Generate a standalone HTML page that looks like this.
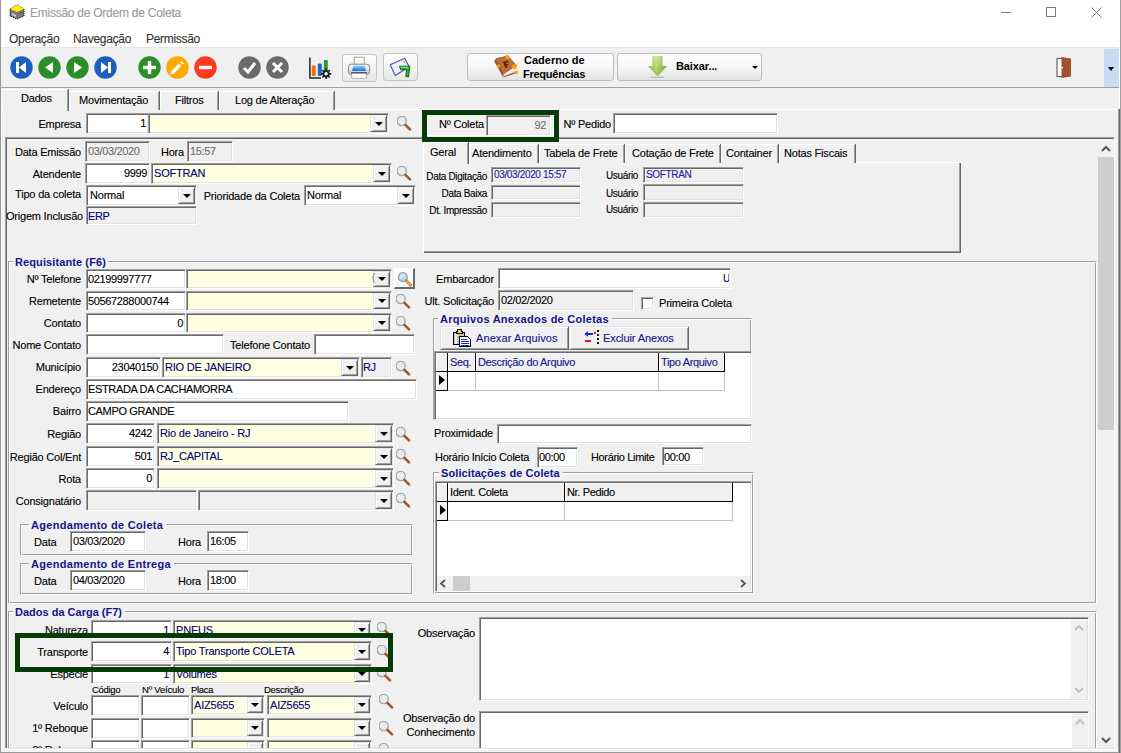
<!DOCTYPE html><html><head><meta charset="utf-8"><style>
html,body{margin:0;padding:0;}
body{width:1121px;height:753px;position:relative;overflow:hidden;background:#fff;font-family:"Liberation Sans",sans-serif;}
.t{position:absolute;white-space:nowrap;font-family:"Liberation Sans",sans-serif;-webkit-text-stroke:0.12px currentColor;}
.b{position:absolute;}
.in{position:absolute;border:1px solid;border-color:#a0a0a0 #fff #fff #a0a0a0;box-shadow:inset 1px 1px 0 #696969, inset -1px -1px 0 #e3e3e3;}
.btn{position:absolute;background:#f0f0f0;border:1px solid;border-color:#e3e3e3 #696969 #696969 #e3e3e3;box-shadow:inset 1px 1px 0 #fff, inset -1px -1px 0 #a0a0a0;}
.tri{position:absolute;width:0;height:0;border-left:4px solid transparent;border-right:4px solid transparent;border-top:4px solid #000;}
.grp{position:absolute;border:1px solid;border-color:#a0a0a0 #fff #fff #a0a0a0;box-shadow:inset 1px 1px 0 #fff, inset -1px -1px 0 #a0a0a0;}
</style></head><body>
<div class="b" style="left:0px;top:0px;width:1px;height:753px;background:#999"></div>
<div class="b" style="left:1120px;top:0px;width:1px;height:753px;background:#a0a0a0"></div>
<svg class="b" style="left:9px;top:4px" width="16" height="16" viewBox="0 0 16 16"><path d="M1 5 L8 1 L15 5 L15 12 L8 15 L1 12 Z" fill="#777" stroke="#000" stroke-width="1" stroke-dasharray="1 1"/><path d="M1 5 L8 1 L15 5 L8 8 Z" fill="#ffef00"/><path d="M3 9 L7 11 L7 13 L3 11Z" fill="#ccc"/><rect x="11" y="8" width="2" height="1" fill="#e00"/><rect x="2" y="10" width="1" height="1" fill="#0c0"/></svg>
<div class="t" style="top:6.43px;font-size:12px;line-height:14px;color:#9a9a9a;letter-spacing:-0.25px;left:30px;">Emissão de Ordem de Coleta</div>
<div class="b" style="left:1001px;top:12px;width:10px;height:1px;background:#7a7a7a"></div>
<div class="b" style="left:1046px;top:7px;width:10px;height:10px;border:1px solid #7a7a7a;box-sizing:border-box"></div>
<svg class="b" style="left:1091px;top:7px" width="11" height="11" viewBox="0 0 11 11"><path d="M0.5 0.5 L10.5 10.5 M10.5 0.5 L0.5 10.5" stroke="#7a7a7a" stroke-width="1"/></svg>
<div class="t" style="top:32.43px;font-size:12px;line-height:14px;color:#333;letter-spacing:-0.3px;left:9px;">Operação</div>
<div class="t" style="top:32.43px;font-size:12px;line-height:14px;color:#333;letter-spacing:-0.3px;left:73px;">Navegação</div>
<div class="t" style="top:32.43px;font-size:12px;line-height:14px;color:#333;letter-spacing:-0.3px;left:146px;">Permissão</div>
<div class="b" style="left:1px;top:47px;width:1118px;height:1px;background:#e6e6e6"></div>
<div class="b" style="left:1px;top:48px;width:1118px;height:39px;background:#f0f0f0"></div>
<div class="b" style="left:1px;top:87px;width:1118px;height:1px;background:#a0a0a0"></div>
<div class="b" style="left:1px;top:88px;width:1118px;height:665px;background:#f0f0f0"></div>
<svg class="b" style="left:9.5px;top:56.3px" width="23" height="23" viewBox="0 0 23 23"><circle cx="11.5" cy="11.5" r="11.2" fill="#1d5fbf"/><rect x="6" y="6" width="3" height="11" fill="#fff"/><path d="M9 11.5 L16 6 L16 17 Z" fill="#fff"/></svg>
<svg class="b" style="left:37.5px;top:56.3px" width="23" height="23" viewBox="0 0 23 23"><circle cx="11.5" cy="11.5" r="11.2" fill="#2a8f2a"/><path d="M7 11.5 L15 6 L15 17 Z" fill="#fff"/></svg>
<svg class="b" style="left:65.5px;top:56.3px" width="23" height="23" viewBox="0 0 23 23"><circle cx="11.5" cy="11.5" r="11.2" fill="#2a8f2a"/><path d="M16 11.5 L8 6 L8 17 Z" fill="#fff"/></svg>
<svg class="b" style="left:93.5px;top:56.3px" width="23" height="23" viewBox="0 0 23 23"><circle cx="11.5" cy="11.5" r="11.2" fill="#1d5fbf"/><rect x="14" y="6" width="3" height="11" fill="#fff"/><path d="M14 11.5 L7 6 L7 17 Z" fill="#fff"/></svg>
<svg class="b" style="left:137.5px;top:56.3px" width="23" height="23" viewBox="0 0 23 23"><circle cx="11.5" cy="11.5" r="11.2" fill="#2a8f2a"/><rect x="5" y="9.8" width="13" height="3.4" fill="#fff"/><rect x="9.8" y="5" width="3.4" height="13" fill="#fff"/></svg>
<svg class="b" style="left:165.5px;top:56.3px" width="23" height="23" viewBox="0 0 23 23"><circle cx="11.5" cy="11.5" r="11.2" fill="#ffa800"/><path d="M7.2 15.8 L14.2 8.8" stroke="#fff" stroke-width="3.4"/><path d="M4.6 18.4 L5.6 14.2 L8.8 17.4 Z" fill="#fff"/><path d="M15.4 7.6 L16.8 6.2" stroke="#fff" stroke-width="3.4"/></svg>
<svg class="b" style="left:193.5px;top:56.3px" width="23" height="23" viewBox="0 0 23 23"><circle cx="11.5" cy="11.5" r="11.2" fill="#fc3a1c"/><rect x="5" y="9.8" width="13" height="3.4" fill="#fff"/></svg>
<svg class="b" style="left:237.5px;top:56.3px" width="23" height="23" viewBox="0 0 23 23"><circle cx="11.5" cy="11.5" r="11.2" fill="#6b6b6b"/><path d="M6 12 L10 16 L17 7" stroke="#fff" stroke-width="3" fill="none"/></svg>
<svg class="b" style="left:265.5px;top:56.3px" width="23" height="23" viewBox="0 0 23 23"><circle cx="11.5" cy="11.5" r="11.2" fill="#6b6b6b"/><path d="M7 7 L16 16 M16 7 L7 16" stroke="#fff" stroke-width="3" fill="none"/></svg>
<svg class="b" style="left:309px;top:57px" width="24" height="24" viewBox="0 0 24 24"><path d="M0.9 0.5 V20.9 H12" stroke="#222" stroke-width="1.5" fill="none"/><rect x="2.8" y="8.5" width="4" height="10.5" rx="1" fill="#ff6a00"/><rect x="8.8" y="6.5" width="4" height="12.5" rx="1" fill="#1e66c8"/><rect x="14.8" y="3" width="4" height="11" rx="1" fill="#2a9a2a"/><g transform="translate(17.1 16.8)"><circle r="3.6" fill="#222"/><path d="M0 -5.2 V5.2 M-5.2 0 H5.2 M-3.7 -3.7 L3.7 3.7 M3.7 -3.7 L-3.7 3.7" stroke="#222" stroke-width="1.7"/><circle r="1.7" fill="#fff"/></g></svg>
<div class="b" style="left:342px;top:54px;width:33px;height:26px;border:1px solid #c4c4c4;border-radius:3px;background:linear-gradient(#fdfdfd,#f4f4f4 50%,#e6e6e6)"></div>
<svg class="b" style="left:347px;top:56px" width="24" height="24" viewBox="0 0 24 24"><defs><linearGradient id="pb" x1="0" y1="0" x2="0" y2="1"><stop offset="0" stop-color="#fafafa"/><stop offset="1" stop-color="#c8c8d4"/></linearGradient><linearGradient id="pt" x1="0" y1="0" x2="0" y2="1"><stop offset="0" stop-color="#9cd4ff"/><stop offset="1" stop-color="#0a6ae8"/></linearGradient><linearGradient id="pp" x1="0" y1="0" x2="0" y2="1"><stop offset="0" stop-color="#fff"/><stop offset="1" stop-color="#f4f4d8"/></linearGradient></defs><rect x="7.2" y="1.2" width="10" height="9" fill="url(#pp)" stroke="#8a8a8a" stroke-width="0.8"/><rect x="1.4" y="8.2" width="21.2" height="10.4" rx="3" fill="url(#pb)" stroke="#7a7a86" stroke-width="0.9"/><path d="M6.5 9.6 H17.5 L19 15 H5 Z" fill="url(#pt)"/><rect x="4" y="16" width="16" height="1.6" fill="#555"/><rect x="4.8" y="17.6" width="14.4" height="4.6" fill="#fff" stroke="#9a9aa6" stroke-width="0.7"/></svg>
<div class="b" style="left:383px;top:53px;width:33px;height:26px;border:1px solid #c4c4c4;border-radius:3px;background:linear-gradient(#fdfdfd,#f4f4f4 50%,#e6e6e6)"></div>
<svg class="b" style="left:389px;top:56px" width="24" height="23" viewBox="0 0 24 23"><path d="M1.2 8.7 L15.7 2.2 L20.1 10.7 L6.2 19.5 Z" fill="#eeeeff" stroke="#4b4bc4" stroke-width="1.1" stroke-linejoin="round"/><circle cx="15.5" cy="6" r="0.9" fill="#9c3"/><path d="M10.5 10.2 H20.8 L19.6 21 L16.8 20.4 L17.6 13.6 H11.5 Z" fill="#22b822" stroke="#0b5a0b" stroke-width="0.9" stroke-linejoin="round"/><path d="M12 11.3 H19.5" stroke="#8ef08e" stroke-width="1"/></svg>
<div class="b" style="left:467px;top:53px;width:145px;height:26px;border:1px solid #bdbdbd;border-radius:3px;background:linear-gradient(#fefefe,#f7f7f7 45%,#e3e3e3)"></div>
<svg class="b" style="left:490px;top:52px" width="32" height="28" viewBox="0 0 32 28"><path d="M4 9 L6 7 L14 22 L13 25 Z" fill="#a0582a"/><path d="M6 6.5 L18 4 L26.5 13.5 L13.5 22.5 Z" fill="#bb6d33" stroke="#8a4a1e" stroke-width="0.6"/><path d="M13.5 22.5 L26.5 13.5 L27.5 19 L14 24.5 Z" fill="#ececf0"/><path d="M13 24.5 L27.5 19 L27 21 L13.5 25.5 Z" fill="#b06030"/><circle cx="17.5" cy="5.2" r="2.2" fill="#ff9c00"/><circle cx="24.5" cy="14.5" r="2.4" fill="#ff9800"/><circle cx="26" cy="20.5" r="1.8" fill="#ff9800"/><circle cx="8.5" cy="14" r="1.4" fill="#ffa800"/><path d="M13 10 L18 8.5 L18.6 10 L15.5 11 L16 12.3 L18 11.7 L18.5 13 L16.5 13.6 L17.3 15.5 L15.6 16 Z" fill="#4a2408"/></svg>
<div class="t" style="top:53.56px;font-size:11px;line-height:13px;color:#000;letter-spacing:0px;font-weight:bold;-webkit-text-stroke:0;left:524px;">Caderno de</div>
<div class="t" style="top:67.56px;font-size:11px;line-height:13px;color:#000;letter-spacing:-0.25px;font-weight:bold;-webkit-text-stroke:0;left:523px;">Frequências</div>
<div class="b" style="left:617px;top:53px;width:143px;height:26px;border:1px solid #bdbdbd;border-radius:3px;background:linear-gradient(#fefefe,#f7f7f7 45%,#e3e3e3)"></div>
<svg class="b" style="left:648px;top:55px" width="20" height="23" viewBox="0 0 20 23"><defs><linearGradient id="ga" x1="0" x2="1"><stop offset="0" stop-color="#8fc440"/><stop offset="0.45" stop-color="#c4e47a"/><stop offset="1" stop-color="#6faa22"/></linearGradient><linearGradient id="gb" x1="0" y1="0" x2="0" y2="1"><stop offset="0" stop-color="#fff" stop-opacity="0.25"/><stop offset="1" stop-color="#2a6a00" stop-opacity="0.25"/></linearGradient></defs><path d="M4.5 1 H14.5 V11 H19 L9.5 21.5 L0 11 H4.5 Z" fill="url(#ga)"/><path d="M4.5 1 H14.5 V11 H19 L9.5 21.5 L0 11 H4.5 Z" fill="url(#gb)"/><rect x="3" y="21.8" width="13" height="1" fill="#777" opacity="0.5"/></svg>
<div class="t" style="top:59.56px;font-size:11px;line-height:13px;color:#000;letter-spacing:-0.1px;font-weight:bold;-webkit-text-stroke:0;left:676px;">Baixar...</div>
<div class="tri" style="left:752px;top:66px;border-left-width:3px;border-right-width:3px;border-top-width:3px"></div>
<svg class="b" style="left:1056px;top:56px" width="16" height="23" viewBox="0 0 16 23"><rect x="1" y="2.5" width="6" height="18" fill="#fff" stroke="#666" stroke-width="1.2"/><path d="M5.5 1 L15 2.5 L15 20.5 L5.5 22 Z" fill="#a0522d"/><rect x="5.6" y="11" width="1.4" height="1.4" fill="#fff"/></svg>
<div class="b" style="left:1104px;top:49px;width:15px;height:38px;background:linear-gradient(#c6daf2,#c9dcf2)"></div>
<div class="tri" style="left:1108px;top:67px;border-left-width:3.5px;border-right-width:3.5px;border-top-width:4px"></div>
<div class="b" style="left:1px;top:109px;width:1118px;height:1px;background:#fff"></div>
<div class="b" style="left:1px;top:109px;width:1px;height:644px;background:#fff"></div>
<div class="b" style="left:69px;top:91px;width:89px;height:18px;background:#f0f0f0;border-top:1px solid #fff;border-left:1px solid #fff;box-shadow:inset -1px 0 0 #a0a0a0, 1px 0 0 #696969"></div>
<div class="t" style="top:93.56px;font-size:11px;line-height:13px;color:#000;letter-spacing:-0.2px;left:79px;">Movimentação</div>
<div class="b" style="left:160px;top:91px;width:57px;height:18px;background:#f0f0f0;border-top:1px solid #fff;border-left:1px solid #fff;box-shadow:inset -1px 0 0 #a0a0a0, 1px 0 0 #696969"></div>
<div class="t" style="top:93.56px;font-size:11px;line-height:13px;color:#000;letter-spacing:-0.2px;left:175px;">Filtros</div>
<div class="b" style="left:219px;top:91px;width:114px;height:18px;background:#f0f0f0;border-top:1px solid #fff;border-left:1px solid #fff;box-shadow:inset -1px 0 0 #a0a0a0, 1px 0 0 #696969"></div>
<div class="t" style="top:93.56px;font-size:11px;line-height:13px;color:#000;letter-spacing:-0.2px;left:235px;">Log de Alteração</div>
<div class="b" style="left:2px;top:89px;width:65px;height:21px;background:#f0f0f0;border-top:1px solid #fff;border-left:1px solid #fff;box-shadow:inset -1px 0 0 #a0a0a0, 1px 0 0 #696969"></div>
<div class="t" style="top:91.56px;font-size:11px;line-height:13px;color:#000;letter-spacing:-0.2px;left:21px;">Dados</div>
<div class="b" style="left:3px;top:109px;width:64px;height:1px;background:#f0f0f0"></div>
<div class="b" style="left:5px;top:137px;width:1108px;height:610px;border:1px solid;border-color:#a0a0a0 #fff #fff #a0a0a0;box-shadow:inset 1px 1px 0 #696969, inset -1px -1px 0 #e3e3e3"></div>
<div class="t" style="top:117.56px;font-size:11px;line-height:13px;color:#000;letter-spacing:-0.2px;right:1040px;">Empresa</div>
<div class="in" style="left:86px;top:113px;width:61px;height:19px;background:#fff"></div>
<div class="t" style="top:116.56px;font-size:11px;line-height:13px;color:#000;letter-spacing:-0.35px;right:975px;">1</div>
<div class="in" style="left:148px;top:113px;width:239px;height:19px;background:#ffffe1"></div>
<div class="btn" style="left:370px;top:115px;width:15px;height:15px"><div class="tri" style="left:3.5px;top:5.5px"></div></div>
<svg class="b" style="left:397px;top:116px" width="15" height="15" viewBox="0 0 15 15"><circle cx="4.7" cy="5" r="4.6" fill="#e8ecee" stroke="#9aa8a8" stroke-width="1.3"/><path d="M8.4 8.8 L13 13.3" stroke="#a5531f" stroke-width="2.5" stroke-linecap="round"/></svg>
<div class="b" style="left:422px;top:110px;width:137px;height:32px;border:5px solid #063b06;box-sizing:border-box"></div>
<div class="b" style="left:427px;top:115px;width:127px;height:21px;border-right:1px solid #fff;border-bottom:1px solid #fff;box-sizing:border-box"></div>
<div class="t" style="top:117.56px;font-size:11px;line-height:13px;color:#000;letter-spacing:-0.2px;right:637px;">Nº Coleta</div>
<div class="in" style="left:486px;top:115px;width:63px;height:19px;background:#f0f0f0"></div>
<div class="t" style="top:118.56px;font-size:11px;line-height:13px;color:#6d6d6d;letter-spacing:-0.35px;right:575px;">92</div>
<div class="t" style="top:117.56px;font-size:11px;line-height:13px;color:#000;letter-spacing:-0.2px;right:510px;">Nº Pedido</div>
<div class="in" style="left:613px;top:113px;width:163px;height:19px;background:#fff"></div>
<div class="b" style="left:1098px;top:140px;width:16px;height:608px;background:#f0f0f0"></div>
<svg class="b" style="left:1100px;top:144px" width="12" height="10" viewBox="0 0 12 10"><path d="M2 7 L6 3 L10 7" stroke="#555" stroke-width="2" fill="none"/></svg>
<div class="b" style="left:1098px;top:157px;width:16px;height:273px;background:#cdcdcd"></div>
<svg class="b" style="left:1100px;top:735px" width="12" height="10" viewBox="0 0 12 10"><path d="M2 3 L6 7 L10 3" stroke="#555" stroke-width="2" fill="none"/></svg>
<div class="t" style="top:145.56px;font-size:11px;line-height:13px;color:#000;letter-spacing:-0.2px;right:1040px;">Data Emissão</div>
<div class="in" style="left:85px;top:141px;width:63px;height:19px;background:#f0f0f0"></div>
<div class="t" style="top:144.56px;font-size:11px;line-height:13px;color:#6d6d6d;letter-spacing:-0.35px;left:88px;">03/03/2020</div>
<div class="t" style="top:145.56px;font-size:11px;line-height:13px;color:#000;letter-spacing:-0.2px;right:937px;">Hora</div>
<div class="in" style="left:187px;top:141px;width:44px;height:19px;background:#f0f0f0"></div>
<div class="t" style="top:144.56px;font-size:11px;line-height:13px;color:#6d6d6d;letter-spacing:-0.35px;left:190px;">15:57</div>
<div class="t" style="top:167.56px;font-size:11px;line-height:13px;color:#000;letter-spacing:-0.2px;right:1040px;">Atendente</div>
<div class="in" style="left:85px;top:163px;width:63px;height:19px;background:#fff"></div>
<div class="t" style="top:166.56px;font-size:11px;line-height:13px;color:#000;letter-spacing:-0.35px;right:974px;">9999</div>
<div class="in" style="left:151px;top:163px;width:239px;height:19px;background:#ffffe1"></div>
<div class="t" style="top:166.56px;font-size:11px;line-height:13px;color:#000080;letter-spacing:-0.2px;left:154px;">SOFTRAN</div>
<div class="btn" style="left:373px;top:165px;width:15px;height:15px"><div class="tri" style="left:3.5px;top:5.5px"></div></div>
<svg class="b" style="left:397px;top:166px" width="15" height="15" viewBox="0 0 15 15"><circle cx="4.7" cy="5" r="4.6" fill="#e8ecee" stroke="#9aa8a8" stroke-width="1.3"/><path d="M8.4 8.8 L13 13.3" stroke="#a5531f" stroke-width="2.5" stroke-linecap="round"/></svg>
<div class="t" style="top:187.56px;font-size:11px;line-height:13px;color:#000;letter-spacing:-0.2px;right:1040px;">Tipo da coleta</div>
<div class="in" style="left:86px;top:185px;width:109px;height:19px;background:#fff"></div>
<div class="btn" style="left:178px;top:187px;width:15px;height:15px"><div class="tri" style="left:3.5px;top:5.5px"></div></div>
<div class="t" style="top:188.56px;font-size:11px;line-height:13px;color:#000;letter-spacing:-0.2px;left:90px;">Normal</div>
<div class="t" style="top:189.56px;font-size:11px;line-height:13px;color:#000;letter-spacing:-0.2px;right:821px;">Prioridade da Coleta</div>
<div class="in" style="left:304px;top:185px;width:110px;height:19px;background:#fff"></div>
<div class="btn" style="left:397px;top:187px;width:15px;height:15px"><div class="tri" style="left:3.5px;top:5.5px"></div></div>
<div class="t" style="top:188.56px;font-size:11px;line-height:13px;color:#000;letter-spacing:-0.2px;left:307px;">Normal</div>
<div class="t" style="top:209.56px;font-size:11px;line-height:13px;color:#000;letter-spacing:-0.2px;right:1038px;">Origem Inclusão</div>
<div class="in" style="left:86px;top:206px;width:109px;height:17px;background:#f0f0f0"></div>
<div class="t" style="top:209.56px;font-size:11px;line-height:13px;color:#000080;letter-spacing:-0.35px;left:88px;">ERP</div>
<div class="b" style="left:423px;top:162px;width:536px;height:89px;background:#f0f0f0;border-top:1px solid #fff;border-left:1px solid #fff;box-shadow:inset -1px -1px 0 #a0a0a0, 1px 1px 0 #696969"></div>
<div class="b" style="left:469px;top:144px;width:68px;height:18px;background:#f0f0f0;border-top:1px solid #fff;border-left:1px solid #fff;box-shadow:inset -1px 0 0 #a0a0a0, 1px 0 0 #696969"></div>
<div class="t" style="top:146.56px;font-size:11px;line-height:13px;color:#000;letter-spacing:-0.2px;left:472px;">Atendimento</div>
<div class="b" style="left:539px;top:144px;width:84px;height:18px;background:#f0f0f0;border-top:1px solid #fff;border-left:1px solid #fff;box-shadow:inset -1px 0 0 #a0a0a0, 1px 0 0 #696969"></div>
<div class="t" style="top:146.56px;font-size:11px;line-height:13px;color:#000;letter-spacing:-0.2px;left:544px;">Tabela de Frete</div>
<div class="b" style="left:625px;top:144px;width:94px;height:18px;background:#f0f0f0;border-top:1px solid #fff;border-left:1px solid #fff;box-shadow:inset -1px 0 0 #a0a0a0, 1px 0 0 #696969"></div>
<div class="t" style="top:146.56px;font-size:11px;line-height:13px;color:#000;letter-spacing:-0.2px;left:632px;">Cotação de Frete</div>
<div class="b" style="left:721px;top:144px;width:56px;height:18px;background:#f0f0f0;border-top:1px solid #fff;border-left:1px solid #fff;box-shadow:inset -1px 0 0 #a0a0a0, 1px 0 0 #696969"></div>
<div class="t" style="top:146.56px;font-size:11px;line-height:13px;color:#000;letter-spacing:-0.2px;left:726px;">Container</div>
<div class="b" style="left:779px;top:144px;width:75px;height:18px;background:#f0f0f0;border-top:1px solid #fff;border-left:1px solid #fff;box-shadow:inset -1px 0 0 #a0a0a0, 1px 0 0 #696969"></div>
<div class="t" style="top:146.56px;font-size:11px;line-height:13px;color:#000;letter-spacing:-0.2px;left:784px;">Notas Fiscais</div>
<div class="b" style="left:423px;top:142px;width:44px;height:21px;background:#f0f0f0;border-top:1px solid #fff;border-left:1px solid #fff;box-shadow:inset -1px 0 0 #a0a0a0, 1px 0 0 #696969"></div>
<div class="t" style="top:145.56px;font-size:11px;line-height:13px;color:#000;letter-spacing:-0.2px;left:430px;">Geral</div>
<div class="b" style="left:424px;top:162px;width:43px;height:1px;background:#f0f0f0"></div>
<div class="t" style="top:170.69px;font-size:10px;line-height:12px;color:#000;letter-spacing:-0.35px;right:634px;">Data Digitação</div>
<div class="in" style="left:491px;top:167px;width:88px;height:14px;background:#f0f0f0"></div>
<div class="t" style="top:168.69px;font-size:10px;line-height:12px;color:#2020a0;letter-spacing:-0.35px;left:494px;">03/03/2020 15:57</div>
<div class="t" style="top:187.69px;font-size:10px;line-height:12px;color:#000;letter-spacing:-0.35px;right:634px;">Data Baixa</div>
<div class="in" style="left:491px;top:185px;width:88px;height:13px;background:#f0f0f0"></div>
<div class="t" style="top:204.69px;font-size:10px;line-height:12px;color:#000;letter-spacing:-0.35px;right:634px;">Dt. Impressão</div>
<div class="in" style="left:491px;top:202px;width:88px;height:14px;background:#f0f0f0"></div>
<div class="t" style="top:169.69px;font-size:10px;line-height:12px;color:#000;letter-spacing:-0.35px;right:483px;">Usuário</div>
<div class="in" style="left:643px;top:167px;width:99px;height:14px;background:#f0f0f0"></div>
<div class="t" style="top:168.69px;font-size:10px;line-height:12px;color:#2020a0;letter-spacing:-0.35px;left:646px;">SOFTRAN</div>
<div class="t" style="top:187.69px;font-size:10px;line-height:12px;color:#000;letter-spacing:-0.35px;right:483px;">Usuário</div>
<div class="in" style="left:643px;top:184px;width:99px;height:15px;background:#f0f0f0"></div>
<div class="t" style="top:203.69px;font-size:10px;line-height:12px;color:#000;letter-spacing:-0.35px;right:483px;">Usuário</div>
<div class="in" style="left:643px;top:202px;width:99px;height:14px;background:#f0f0f0"></div>
<div class="grp" style="left:8px;top:261px;width:1087px;height:341px"></div>
<div class="b" style="left:13px;top:259px;width:95px;height:5px;background:#f0f0f0"></div>
<div class="t" style="top:255.56px;font-size:11px;line-height:13px;color:#14148c;letter-spacing:0.1px;font-weight:bold;-webkit-text-stroke:0;left:15px;">Requisitante (F6)</div>
<div class="t" style="top:272.56px;font-size:11px;line-height:13px;color:#000;letter-spacing:-0.2px;right:1040px;">Nº Telefone</div>
<div class="in" style="left:86px;top:269px;width:98px;height:18px;background:#fff"></div>
<div class="t" style="top:272.56px;font-size:11px;line-height:13px;color:#000;letter-spacing:-0.35px;left:88px;">02199997777</div>
<div class="in" style="left:186px;top:269px;width:204px;height:18px;background:#ffffe1"></div>
<div class="btn" style="left:373px;top:271px;width:15px;height:14px"><div class="tri" style="left:3.5px;top:5.0px"></div></div>
<div class="t" style="top:271.69px;font-size:10px;line-height:12px;color:#8080a0;letter-spacing:-0.2px;left:372px;">(</div>
<div class="b" style="left:394px;top:268px;width:18px;height:18px;border-top:1px solid #fff;border-left:1px solid #fff;border-right:2px solid #696969;border-bottom:2px solid #696969;background:linear-gradient(#fcfcfc,#f3f3f3)"></div>
<svg class="b" style="left:398px;top:272px" width="15" height="15" viewBox="0 0 15 15"><defs><radialGradient id="lb" cx="0.4" cy="0.35" r="0.7"><stop offset="0" stop-color="#eaf4ff"/><stop offset="1" stop-color="#8cc0f0"/></radialGradient></defs><circle cx="4.9" cy="5.2" r="4.5" fill="url(#lb)" stroke="#9aa4aa" stroke-width="1.2"/><path d="M8.3 8.8 L12.6 13" stroke="#b86a20" stroke-width="2.8" stroke-linecap="round"/><path d="M8.6 9 L12.3 12.7" stroke="#ffc830" stroke-width="1.3" stroke-linecap="round"/></svg>
<div class="t" style="top:294.56px;font-size:11px;line-height:13px;color:#000;letter-spacing:-0.2px;right:1040px;">Remetente</div>
<div class="in" style="left:86px;top:291px;width:98px;height:18px;background:#fff"></div>
<div class="t" style="top:294.56px;font-size:11px;line-height:13px;color:#000;letter-spacing:-0.35px;left:88px;">50567288000744</div>
<div class="in" style="left:186px;top:291px;width:204px;height:18px;background:#ffffe1"></div>
<div class="btn" style="left:373px;top:293px;width:15px;height:14px"><div class="tri" style="left:3.5px;top:5.0px"></div></div>
<svg class="b" style="left:396px;top:294px" width="15" height="15" viewBox="0 0 15 15"><circle cx="4.7" cy="5" r="4.6" fill="#e8ecee" stroke="#9aa8a8" stroke-width="1.3"/><path d="M8.4 8.8 L13 13.3" stroke="#a5531f" stroke-width="2.5" stroke-linecap="round"/></svg>
<div class="t" style="top:316.56px;font-size:11px;line-height:13px;color:#000;letter-spacing:-0.2px;right:1040px;">Contato</div>
<div class="in" style="left:86px;top:313px;width:98px;height:18px;background:#fff"></div>
<div class="t" style="top:316.56px;font-size:11px;line-height:13px;color:#000;letter-spacing:-0.35px;right:938px;">0</div>
<div class="in" style="left:186px;top:313px;width:204px;height:18px;background:#ffffe1"></div>
<div class="btn" style="left:373px;top:315px;width:15px;height:14px"><div class="tri" style="left:3.5px;top:5.0px"></div></div>
<svg class="b" style="left:396px;top:316px" width="15" height="15" viewBox="0 0 15 15"><circle cx="4.7" cy="5" r="4.6" fill="#e8ecee" stroke="#9aa8a8" stroke-width="1.3"/><path d="M8.4 8.8 L13 13.3" stroke="#a5531f" stroke-width="2.5" stroke-linecap="round"/></svg>
<div class="t" style="top:338.56px;font-size:11px;line-height:13px;color:#000;letter-spacing:-0.2px;right:1040px;">Nome Contato</div>
<div class="in" style="left:86px;top:334px;width:136px;height:19px;background:#fff"></div>
<div class="t" style="top:338.56px;font-size:11px;line-height:13px;color:#000;letter-spacing:-0.2px;right:811px;">Telefone Contato</div>
<div class="in" style="left:314px;top:334px;width:99px;height:19px;background:#fff"></div>
<div class="t" style="top:360.56px;font-size:11px;line-height:13px;color:#000;letter-spacing:-0.2px;right:1040px;">Município</div>
<div class="in" style="left:86px;top:357px;width:73px;height:19px;background:#fff"></div>
<div class="t" style="top:360.56px;font-size:11px;line-height:13px;color:#000;letter-spacing:-0.35px;right:963px;">23040150</div>
<div class="in" style="left:162px;top:357px;width:196px;height:19px;background:#ffffe1"></div>
<div class="t" style="top:360.56px;font-size:11px;line-height:13px;color:#000080;letter-spacing:-0.2px;left:165px;">RIO DE JANEIRO</div>
<div class="btn" style="left:341px;top:359px;width:15px;height:15px"><div class="tri" style="left:3.5px;top:5.5px"></div></div>
<div class="in" style="left:361px;top:357px;width:29px;height:19px;background:#f0f0f0"></div>
<div class="t" style="top:360.56px;font-size:11px;line-height:13px;color:#000080;letter-spacing:-0.35px;left:363px;">RJ</div>
<svg class="b" style="left:396px;top:361px" width="15" height="15" viewBox="0 0 15 15"><circle cx="4.7" cy="5" r="4.6" fill="#e8ecee" stroke="#9aa8a8" stroke-width="1.3"/><path d="M8.4 8.8 L13 13.3" stroke="#a5531f" stroke-width="2.5" stroke-linecap="round"/></svg>
<div class="t" style="top:382.56px;font-size:11px;line-height:13px;color:#000;letter-spacing:-0.2px;right:1040px;">Endereço</div>
<div class="in" style="left:86px;top:379px;width:329px;height:19px;background:#fff"></div>
<div class="t" style="top:382.56px;font-size:11px;line-height:13px;color:#000;letter-spacing:-0.35px;left:88px;">ESTRADA DA CACHAMORRA</div>
<div class="t" style="top:404.56px;font-size:11px;line-height:13px;color:#000;letter-spacing:-0.2px;right:1040px;">Bairro</div>
<div class="in" style="left:86px;top:401px;width:261px;height:19px;background:#fff"></div>
<div class="t" style="top:404.56px;font-size:11px;line-height:13px;color:#000;letter-spacing:-0.35px;left:88px;">CAMPO GRANDE</div>
<div class="t" style="top:427.56px;font-size:11px;line-height:13px;color:#000;letter-spacing:-0.2px;right:1040px;">Região</div>
<div class="in" style="left:86px;top:423px;width:67px;height:19px;background:#fff"></div>
<div class="t" style="top:426.56px;font-size:11px;line-height:13px;color:#000;letter-spacing:-0.35px;right:969px;">4242</div>
<div class="in" style="left:157px;top:423px;width:235px;height:19px;background:#ffffe1"></div>
<div class="t" style="top:426.56px;font-size:11px;line-height:13px;color:#000080;letter-spacing:-0.2px;left:160px;">Rio de Janeiro - RJ</div>
<div class="btn" style="left:375px;top:425px;width:15px;height:15px"><div class="tri" style="left:3.5px;top:5.5px"></div></div>
<svg class="b" style="left:396px;top:427px" width="15" height="15" viewBox="0 0 15 15"><circle cx="4.7" cy="5" r="4.6" fill="#e8ecee" stroke="#9aa8a8" stroke-width="1.3"/><path d="M8.4 8.8 L13 13.3" stroke="#a5531f" stroke-width="2.5" stroke-linecap="round"/></svg>
<div class="t" style="top:450.56px;font-size:11px;line-height:13px;color:#000;letter-spacing:-0.2px;right:1040px;">Região Col/Ent</div>
<div class="in" style="left:86px;top:446px;width:67px;height:19px;background:#fff"></div>
<div class="t" style="top:449.56px;font-size:11px;line-height:13px;color:#000;letter-spacing:-0.35px;right:969px;">501</div>
<div class="in" style="left:157px;top:446px;width:235px;height:19px;background:#ffffe1"></div>
<div class="t" style="top:449.56px;font-size:11px;line-height:13px;color:#000080;letter-spacing:-0.2px;left:160px;">RJ_CAPITAL</div>
<div class="btn" style="left:375px;top:448px;width:15px;height:15px"><div class="tri" style="left:3.5px;top:5.5px"></div></div>
<svg class="b" style="left:396px;top:449px" width="15" height="15" viewBox="0 0 15 15"><circle cx="4.7" cy="5" r="4.6" fill="#e8ecee" stroke="#9aa8a8" stroke-width="1.3"/><path d="M8.4 8.8 L13 13.3" stroke="#a5531f" stroke-width="2.5" stroke-linecap="round"/></svg>
<div class="t" style="top:472.56px;font-size:11px;line-height:13px;color:#000;letter-spacing:-0.2px;right:1040px;">Rota</div>
<div class="in" style="left:86px;top:468px;width:67px;height:19px;background:#fff"></div>
<div class="t" style="top:471.56px;font-size:11px;line-height:13px;color:#000;letter-spacing:-0.35px;right:969px;">0</div>
<div class="in" style="left:157px;top:468px;width:235px;height:19px;background:#ffffe1"></div>
<div class="btn" style="left:375px;top:470px;width:15px;height:15px"><div class="tri" style="left:3.5px;top:5.5px"></div></div>
<svg class="b" style="left:396px;top:471px" width="15" height="15" viewBox="0 0 15 15"><circle cx="4.7" cy="5" r="4.6" fill="#e8ecee" stroke="#9aa8a8" stroke-width="1.3"/><path d="M8.4 8.8 L13 13.3" stroke="#a5531f" stroke-width="2.5" stroke-linecap="round"/></svg>
<div class="t" style="top:494.56px;font-size:11px;line-height:13px;color:#000;letter-spacing:-0.2px;right:1040px;">Consignatário</div>
<div class="in" style="left:86px;top:490px;width:109px;height:19px;background:#f0f0f0"></div>
<div class="in" style="left:198px;top:490px;width:194px;height:19px;background:#f0f0f0"></div>
<div class="btn" style="left:375px;top:492px;width:15px;height:15px"><div class="tri" style="left:3.5px;top:5.5px"></div></div>
<svg class="b" style="left:396px;top:493px" width="15" height="15" viewBox="0 0 15 15"><circle cx="4.7" cy="5" r="4.6" fill="#e8ecee" stroke="#9aa8a8" stroke-width="1.3"/><path d="M8.4 8.8 L13 13.3" stroke="#a5531f" stroke-width="2.5" stroke-linecap="round"/></svg>
<div class="grp" style="left:20px;top:524px;width:391px;height:30px"></div>
<div class="b" style="left:29px;top:522px;width:137px;height:5px;background:#f0f0f0"></div>
<div class="t" style="top:518.56px;font-size:11px;line-height:13px;color:#14148c;letter-spacing:0.3px;font-weight:bold;-webkit-text-stroke:0;left:31px;">Agendamento de Coleta</div>
<div class="t" style="top:535.56px;font-size:11px;line-height:13px;color:#000;letter-spacing:-0.2px;left:34px;">Data</div>
<div class="in" style="left:70px;top:531px;width:74px;height:19px;background:#fff"></div>
<div class="t" style="top:534.56px;font-size:11px;line-height:13px;color:#000;letter-spacing:-0.35px;left:73px;">03/03/2020</div>
<div class="t" style="top:535.56px;font-size:11px;line-height:13px;color:#000;letter-spacing:-0.2px;left:178px;">Hora</div>
<div class="in" style="left:207px;top:531px;width:40px;height:19px;background:#fff"></div>
<div class="t" style="top:534.56px;font-size:11px;line-height:13px;color:#000;letter-spacing:-0.35px;left:210px;">16:05</div>
<div class="grp" style="left:20px;top:563px;width:391px;height:30px"></div>
<div class="b" style="left:29px;top:561px;width:145px;height:5px;background:#f0f0f0"></div>
<div class="t" style="top:557.56px;font-size:11px;line-height:13px;color:#14148c;letter-spacing:0.3px;font-weight:bold;-webkit-text-stroke:0;left:31px;">Agendamento de Entrega</div>
<div class="t" style="top:574.56px;font-size:11px;line-height:13px;color:#000;letter-spacing:-0.2px;left:34px;">Data</div>
<div class="in" style="left:70px;top:570px;width:74px;height:19px;background:#fff"></div>
<div class="t" style="top:573.56px;font-size:11px;line-height:13px;color:#000;letter-spacing:-0.35px;left:73px;">04/03/2020</div>
<div class="t" style="top:574.56px;font-size:11px;line-height:13px;color:#000;letter-spacing:-0.2px;left:178px;">Hora</div>
<div class="in" style="left:207px;top:570px;width:40px;height:19px;background:#fff"></div>
<div class="t" style="top:573.56px;font-size:11px;line-height:13px;color:#000;letter-spacing:-0.35px;left:210px;">18:00</div>
<div class="t" style="top:272.56px;font-size:11px;line-height:13px;color:#000;letter-spacing:-0.2px;right:627px;">Embarcador</div>
<div class="in" style="left:498px;top:268px;width:231px;height:19px;background:#fff"></div>
<div class="b" style="left:723px;top:270px;width:6px;height:14px;overflow:hidden"><div class="t" style="left:0;top:2.5px;font-size:10px;line-height:12px;color:#000080">U</div></div>
<div class="t" style="top:294.56px;font-size:11px;line-height:13px;color:#000;letter-spacing:-0.2px;right:627px;">Ult. Solicitação</div>
<div class="in" style="left:498px;top:290px;width:134px;height:19px;background:#f0f0f0"></div>
<div class="t" style="top:293.56px;font-size:11px;line-height:13px;color:#000;letter-spacing:-0.35px;left:501px;">02/02/2020</div>
<div class="in" style="left:641px;top:297px;width:11px;height:11px;background:#fff"></div>
<div class="t" style="top:296.56px;font-size:11px;line-height:13px;color:#000;letter-spacing:-0.2px;left:659px;">Primeira Coleta</div>
<div class="grp" style="left:433px;top:318px;width:317px;height:100px"></div>
<div class="b" style="left:438px;top:316px;width:174px;height:5px;background:#f0f0f0"></div>
<div class="t" style="top:312.56px;font-size:11px;line-height:13px;color:#14148c;letter-spacing:0.26px;font-weight:bold;-webkit-text-stroke:0;left:440px;">Arquivos Anexados de Coletas</div>
<div class="btn" style="left:440px;top:326px;width:127px;height:22px"></div>
<svg class="b" style="left:453px;top:329px" width="19" height="19" viewBox="0 0 19 19" shape-rendering="crispEdges"><rect x="0.5" y="3.5" width="11" height="12" fill="#c4c4c4" stroke="#000" stroke-width="1"/><rect x="1.5" y="4.5" width="2" height="10" fill="#eee"/><path d="M3.5 4.5 L4.5 0.5 H8.5 L9.5 4.5 Z" fill="#f5dc30" stroke="#000" stroke-width="1"/><path d="M6.5 7.5 H14.5 L17.5 10.5 V17.5 H6.5 Z" fill="#fff" stroke="#000" stroke-width="1"/><rect x="8" y="10" width="6" height="1" fill="#1a2ad0"/><rect x="8" y="12" width="8" height="1" fill="#1a2ad0"/><rect x="8" y="14" width="8" height="1" fill="#1a2ad0"/><rect x="8" y="16" width="8" height="1" fill="#1a2ad0"/></svg>
<div class="t" style="top:331.56px;font-size:11px;line-height:13px;color:#14148c;letter-spacing:0.1px;left:476px;">Anexar Arquivos</div>
<div class="btn" style="left:569px;top:326px;width:118px;height:22px"></div>
<svg class="b" style="left:584px;top:330px" width="16" height="15" viewBox="0 0 16 15"><path d="M1 4 H9" stroke="#1a2ae0" stroke-width="2"/><path d="M0.5 4 L4 1 L4 7 Z" fill="#1a2ae0"/><path d="M1 11 H7" stroke="#e01a1a" stroke-width="2"/><path d="M14 0 V15" stroke="#111" stroke-width="2" stroke-dasharray="2 2"/><rect x="10" y="2" width="2" height="2" fill="#e01a1a"/></svg>
<div class="t" style="top:331.56px;font-size:11px;line-height:13px;color:#14148c;letter-spacing:-0.1px;left:603px;">Excluir Anexos</div>
<div class="in" style="left:434px;top:351px;width:316px;height:67px;background:#fff"></div>
<div class="b" style="left:436px;top:353px;width:10px;height:17px;background:#f0f0f0;border-top:1px solid #fff;border-left:1px solid #fff;border-right:1px solid #808080"></div>
<div class="b" style="left:447px;top:353px;width:1px;height:19px;background:#000"></div>
<div class="b" style="left:448px;top:353px;width:26px;height:17px;background:#f0f0f0;border-top:1px solid #fff;border-left:1px solid #fff;border-right:1px solid #808080"></div>
<div class="b" style="left:475px;top:353px;width:1px;height:19px;background:#000"></div>
<div class="b" style="left:476px;top:353px;width:181px;height:17px;background:#f0f0f0;border-top:1px solid #fff;border-left:1px solid #fff;border-right:1px solid #808080"></div>
<div class="b" style="left:658px;top:353px;width:1px;height:19px;background:#000"></div>
<div class="b" style="left:659px;top:353px;width:64px;height:17px;background:#f0f0f0;border-top:1px solid #fff;border-left:1px solid #fff;border-right:1px solid #808080"></div>
<div class="b" style="left:724px;top:353px;width:1px;height:19px;background:#000"></div>
<div class="b" style="left:436px;top:371px;width:289px;height:1px;background:#000"></div>
<div class="b" style="left:436px;top:372px;width:10px;height:18px;background:#f0f0f0;border-top:1px solid #fff;border-left:1px solid #fff;border-right:1px solid #808080"></div>
<div class="b" style="left:447px;top:372px;width:1px;height:19px;background:#000"></div>
<div class="b" style="left:436px;top:390px;width:12px;height:1px;background:#000"></div>
<div class="b" style="left:439px;top:375px;width:0;height:0;border-top:5.5px solid transparent;border-bottom:5.5px solid transparent;border-left:6.5px solid #000"></div>
<div class="b" style="left:475px;top:372px;width:1px;height:19px;background:#c0c0c0"></div>
<div class="b" style="left:658px;top:372px;width:1px;height:19px;background:#c0c0c0"></div>
<div class="b" style="left:724px;top:372px;width:1px;height:19px;background:#c0c0c0"></div>
<div class="b" style="left:448px;top:390px;width:277px;height:1px;background:#c0c0c0"></div>
<div class="t" style="top:355.56px;font-size:11px;line-height:13px;color:#14148c;letter-spacing:-0.35px;left:450px;">Seq.</div>
<div class="t" style="top:355.56px;font-size:11px;line-height:13px;color:#14148c;letter-spacing:-0.35px;left:478px;">Descrição do Arquivo</div>
<div class="t" style="top:355.56px;font-size:11px;line-height:13px;color:#14148c;letter-spacing:-0.35px;left:661px;">Tipo Arquivo</div>
<div class="t" style="top:426.56px;font-size:11px;line-height:13px;color:#000;letter-spacing:-0.2px;right:628px;">Proximidade</div>
<div class="in" style="left:497px;top:424px;width:253px;height:18px;background:#fff"></div>
<div class="t" style="top:450.56px;font-size:11px;line-height:13px;color:#000;letter-spacing:-0.3px;left:435px;">Horário Início Coleta</div>
<div class="in" style="left:537px;top:447px;width:39px;height:19px;background:#fff"></div>
<div class="t" style="top:450.56px;font-size:11px;line-height:13px;color:#000;letter-spacing:-0.35px;left:539px;">00:00</div>
<div class="t" style="top:450.56px;font-size:11px;line-height:13px;color:#000;letter-spacing:-0.35px;left:591px;">Horário Limite</div>
<div class="in" style="left:662px;top:447px;width:40px;height:17px;background:#fff"></div>
<div class="t" style="top:450.56px;font-size:11px;line-height:13px;color:#000;letter-spacing:-0.35px;left:664px;">00:00</div>
<div class="grp" style="left:433px;top:472px;width:319px;height:120px"></div>
<div class="b" style="left:439px;top:470px;width:124px;height:5px;background:#f0f0f0"></div>
<div class="t" style="top:466.56px;font-size:11px;line-height:13px;color:#14148c;letter-spacing:0.09px;font-weight:bold;-webkit-text-stroke:0;left:441px;">Solicitações de Coleta</div>
<div class="in" style="left:435px;top:481px;width:315px;height:109px;background:#fff"></div>
<div class="b" style="left:437px;top:483px;width:9px;height:17px;background:#f0f0f0;border-top:1px solid #fff;border-left:1px solid #fff;border-right:1px solid #808080"></div>
<div class="b" style="left:447px;top:483px;width:1px;height:19px;background:#000"></div>
<div class="b" style="left:448px;top:483px;width:115px;height:17px;background:#f0f0f0;border-top:1px solid #fff;border-left:1px solid #fff;border-right:1px solid #808080"></div>
<div class="b" style="left:564px;top:483px;width:1px;height:19px;background:#000"></div>
<div class="b" style="left:565px;top:483px;width:166px;height:17px;background:#f0f0f0;border-top:1px solid #fff;border-left:1px solid #fff;border-right:1px solid #808080"></div>
<div class="b" style="left:732px;top:483px;width:1px;height:19px;background:#000"></div>
<div class="b" style="left:437px;top:501px;width:296px;height:1px;background:#000"></div>
<div class="b" style="left:437px;top:502px;width:9px;height:18px;background:#f0f0f0;border-top:1px solid #fff;border-left:1px solid #fff;border-right:1px solid #808080"></div>
<div class="b" style="left:447px;top:502px;width:1px;height:19px;background:#000"></div>
<div class="b" style="left:437px;top:520px;width:11px;height:1px;background:#000"></div>
<div class="b" style="left:440px;top:505px;width:0;height:0;border-top:5.5px solid transparent;border-bottom:5.5px solid transparent;border-left:6.5px solid #000"></div>
<div class="b" style="left:564px;top:502px;width:1px;height:19px;background:#c0c0c0"></div>
<div class="b" style="left:732px;top:502px;width:1px;height:19px;background:#c0c0c0"></div>
<div class="b" style="left:448px;top:520px;width:285px;height:1px;background:#c0c0c0"></div>
<div class="t" style="top:485.56px;font-size:11px;line-height:13px;color:#000;letter-spacing:-0.35px;left:450px;">Ident. Coleta</div>
<div class="t" style="top:485.56px;font-size:11px;line-height:13px;color:#000;letter-spacing:-0.35px;left:567px;">Nr. Pedido</div>
<div class="b" style="left:437px;top:576px;width:313px;height:15px;background:#f0f0f0"></div>
<svg class="b" style="left:438px;top:578px" width="10" height="11" viewBox="0 0 10 11"><path d="M7 2 L3 5.5 L7 9" stroke="#555" stroke-width="1.8" fill="none"/></svg>
<div class="b" style="left:453px;top:576px;width:17px;height:15px;background:#cdcdcd"></div>
<svg class="b" style="left:738px;top:578px" width="10" height="11" viewBox="0 0 10 11"><path d="M3 2 L7 5.5 L3 9" stroke="#555" stroke-width="1.8" fill="none"/></svg>
<div class="grp" style="left:8px;top:611px;width:1087px;height:198px"></div>
<div class="b" style="left:13px;top:609px;width:112px;height:5px;background:#f0f0f0"></div>
<div class="t" style="top:605.56px;font-size:11px;line-height:13px;color:#14148c;letter-spacing:0px;font-weight:bold;-webkit-text-stroke:0;left:15px;">Dados da Carga (F7)</div>
<div class="t" style="top:623.56px;font-size:11px;line-height:13px;color:#000;letter-spacing:-0.2px;right:1033px;">Natureza</div>
<div class="in" style="left:91px;top:620px;width:79px;height:17px;background:#fff"></div>
<div class="t" style="top:623.56px;font-size:11px;line-height:13px;color:#000;letter-spacing:-0.35px;right:952px;">1</div>
<div class="in" style="left:173px;top:620px;width:197px;height:17px;background:#ffffe1"></div>
<div class="t" style="top:623.56px;font-size:11px;line-height:13px;color:#000080;letter-spacing:-0.2px;left:176px;">PNEUS</div>
<div class="btn" style="left:354px;top:622px;width:14px;height:13px"><div class="tri" style="left:3.0px;top:4.5px"></div></div>
<svg class="b" style="left:377px;top:622px" width="15" height="15" viewBox="0 0 15 15"><circle cx="4.7" cy="5" r="4.6" fill="#e8ecee" stroke="#9aa8a8" stroke-width="1.3"/><path d="M8.4 8.8 L13 13.3" stroke="#a5531f" stroke-width="2.5" stroke-linecap="round"/></svg>
<div class="t" style="top:645.56px;font-size:11px;line-height:13px;color:#000;letter-spacing:-0.2px;right:1033px;">Transporte</div>
<div class="in" style="left:91px;top:641px;width:79px;height:19px;background:#fff"></div>
<div class="t" style="top:644.56px;font-size:11px;line-height:13px;color:#000;letter-spacing:-0.35px;right:952px;">4</div>
<div class="in" style="left:173px;top:641px;width:197px;height:19px;background:#ffffe1"></div>
<div class="t" style="top:644.56px;font-size:11px;line-height:13px;color:#000080;letter-spacing:-0.2px;left:176px;">Tipo Transporte COLETA</div>
<div class="btn" style="left:354px;top:643px;width:14px;height:15px"><div class="tri" style="left:3.0px;top:5.5px"></div></div>
<svg class="b" style="left:377px;top:645px" width="15" height="15" viewBox="0 0 15 15"><circle cx="4.7" cy="5" r="4.6" fill="#e8ecee" stroke="#9aa8a8" stroke-width="1.3"/><path d="M8.4 8.8 L13 13.3" stroke="#a5531f" stroke-width="2.5" stroke-linecap="round"/></svg>
<div class="t" style="top:667.56px;font-size:11px;line-height:13px;color:#000;letter-spacing:-0.2px;right:1033px;">Espécie</div>
<div class="in" style="left:91px;top:664px;width:79px;height:18px;background:#fff"></div>
<div class="t" style="top:667.56px;font-size:11px;line-height:13px;color:#000;letter-spacing:-0.35px;right:952px;">1</div>
<div class="in" style="left:173px;top:664px;width:197px;height:18px;background:#ffffe1"></div>
<div class="t" style="top:667.56px;font-size:11px;line-height:13px;color:#000080;letter-spacing:-0.2px;left:176px;">Volumes</div>
<div class="btn" style="left:354px;top:666px;width:14px;height:14px"><div class="tri" style="left:3.0px;top:5.0px"></div></div>
<svg class="b" style="left:377px;top:667px" width="15" height="15" viewBox="0 0 15 15"><circle cx="4.7" cy="5" r="4.6" fill="#e8ecee" stroke="#9aa8a8" stroke-width="1.3"/><path d="M8.4 8.8 L13 13.3" stroke="#a5531f" stroke-width="2.5" stroke-linecap="round"/></svg>
<div class="b" style="left:15px;top:633px;width:378px;height:39px;border:5px solid #063b06;box-sizing:border-box"></div>
<div class="t" style="top:684.01px;font-size:9.5px;line-height:11px;color:#000;letter-spacing:-0.3px;left:92px;">Código</div>
<div class="t" style="top:684.01px;font-size:9.5px;line-height:11px;color:#000;letter-spacing:-0.2px;left:142px;">Nº Veículo</div>
<div class="t" style="top:684.01px;font-size:9.5px;line-height:11px;color:#000;letter-spacing:-0.3px;left:191px;">Placa</div>
<div class="t" style="top:684.01px;font-size:9.5px;line-height:11px;color:#000;letter-spacing:-0.3px;left:264px;">Descrição</div>
<div class="t" style="top:699.56px;font-size:11px;line-height:13px;color:#000;letter-spacing:-0.2px;right:1033px;">Veículo</div>
<div class="in" style="left:91px;top:695px;width:47px;height:19px;background:#fff"></div>
<div class="in" style="left:141px;top:695px;width:47px;height:19px;background:#fff"></div>
<div class="in" style="left:191px;top:695px;width:72px;height:18px;background:#ffffe1"></div>
<div class="t" style="top:698.56px;font-size:11px;line-height:13px;color:#000080;letter-spacing:-0.2px;left:194px;">AIZ5655</div>
<div class="btn" style="left:247px;top:697px;width:14px;height:14px"><div class="tri" style="left:3.0px;top:5.0px"></div></div>
<div class="in" style="left:267px;top:695px;width:103px;height:18px;background:#ffffe1"></div>
<div class="t" style="top:698.56px;font-size:11px;line-height:13px;color:#000080;letter-spacing:-0.2px;left:270px;">AIZ5655</div>
<div class="btn" style="left:354px;top:697px;width:14px;height:14px"><div class="tri" style="left:3.0px;top:5.0px"></div></div>
<svg class="b" style="left:379px;top:694px" width="15" height="15" viewBox="0 0 15 15"><circle cx="4.7" cy="5" r="4.6" fill="#e8ecee" stroke="#9aa8a8" stroke-width="1.3"/><path d="M8.4 8.8 L13 13.3" stroke="#a5531f" stroke-width="2.5" stroke-linecap="round"/></svg>
<div class="t" style="top:721.56px;font-size:11px;line-height:13px;color:#000;letter-spacing:-0.2px;right:1033px;">1º Reboque</div>
<div class="in" style="left:91px;top:718px;width:47px;height:19px;background:#fff"></div>
<div class="in" style="left:141px;top:718px;width:47px;height:19px;background:#fff"></div>
<div class="in" style="left:191px;top:718px;width:72px;height:18px;background:#ffffe1"></div>
<div class="btn" style="left:247px;top:720px;width:14px;height:14px"><div class="tri" style="left:3.0px;top:5.0px"></div></div>
<div class="in" style="left:267px;top:718px;width:103px;height:18px;background:#ffffe1"></div>
<div class="btn" style="left:354px;top:720px;width:14px;height:14px"><div class="tri" style="left:3.0px;top:5.0px"></div></div>
<svg class="b" style="left:379px;top:721px" width="15" height="15" viewBox="0 0 15 15"><circle cx="4.7" cy="5" r="4.6" fill="#e8ecee" stroke="#9aa8a8" stroke-width="1.3"/><path d="M8.4 8.8 L13 13.3" stroke="#a5531f" stroke-width="2.5" stroke-linecap="round"/></svg>
<div class="t" style="top:743.56px;font-size:11px;line-height:13px;color:#000;letter-spacing:-0.2px;right:1033px;">2º Reboque</div>
<div class="in" style="left:91px;top:740px;width:47px;height:19px;background:#fff"></div>
<div class="in" style="left:141px;top:740px;width:47px;height:19px;background:#fff"></div>
<div class="in" style="left:191px;top:740px;width:72px;height:18px;background:#ffffe1"></div>
<div class="btn" style="left:247px;top:742px;width:14px;height:14px"><div class="tri" style="left:3.0px;top:5.0px"></div></div>
<div class="in" style="left:267px;top:740px;width:103px;height:18px;background:#ffffe1"></div>
<div class="btn" style="left:354px;top:742px;width:14px;height:14px"><div class="tri" style="left:3.0px;top:5.0px"></div></div>
<svg class="b" style="left:379px;top:743px" width="15" height="15" viewBox="0 0 15 15"><circle cx="4.7" cy="5" r="4.6" fill="#e8ecee" stroke="#9aa8a8" stroke-width="1.3"/><path d="M8.4 8.8 L13 13.3" stroke="#a5531f" stroke-width="2.5" stroke-linecap="round"/></svg>
<div class="t" style="top:626.56px;font-size:11px;line-height:13px;color:#000;letter-spacing:-0.2px;right:646px;">Observação</div>
<div class="in" style="left:479px;top:617px;width:608px;height:82px;background:#fff"></div>
<div class="b" style="left:1071px;top:619px;width:16px;height:80px;background:#f0f0f0"></div>
<svg class="b" style="left:1073px;top:623px" width="12" height="10" viewBox="0 0 12 10"><path d="M2 7 L6 3 L10 7" stroke="#bdbdbd" stroke-width="1.8" fill="none"/></svg>
<svg class="b" style="left:1073px;top:685px" width="12" height="10" viewBox="0 0 12 10"><path d="M2 3 L6 7 L10 3" stroke="#bdbdbd" stroke-width="1.8" fill="none"/></svg>
<div class="t" style="top:711.56px;font-size:11px;line-height:13px;color:#000;letter-spacing:-0.2px;right:646px;">Observação do</div>
<div class="t" style="top:725.56px;font-size:11px;line-height:13px;color:#000;letter-spacing:-0.2px;right:646px;">Conhecimento</div>
<div class="in" style="left:479px;top:711px;width:608px;height:81px;background:#fff"></div>
<div class="b" style="left:1072px;top:713px;width:16px;height:79px;background:#f0f0f0"></div>
<svg class="b" style="left:1074px;top:717px" width="12" height="10" viewBox="0 0 12 10"><path d="M2 7 L6 3 L10 7" stroke="#bdbdbd" stroke-width="1.8" fill="none"/></svg>
<div class="b" style="left:1px;top:748px;width:1118px;height:5px;background:#f4f4f4"></div>
<div class="b" style="left:7px;top:748px;width:1108px;height:1px;background:#e3e3e3"></div>
<div class="b" style="left:5px;top:749px;width:1111px;height:1px;background:#fff"></div>
<div class="b" style="left:1px;top:752px;width:1120px;height:1px;background:#999"></div>
<div class="b" style="left:1118px;top:109px;width:1px;height:644px;background:#a0a0a0"></div>
<div class="b" style="left:1119px;top:109px;width:1px;height:644px;background:#696969"></div>
</body></html>
